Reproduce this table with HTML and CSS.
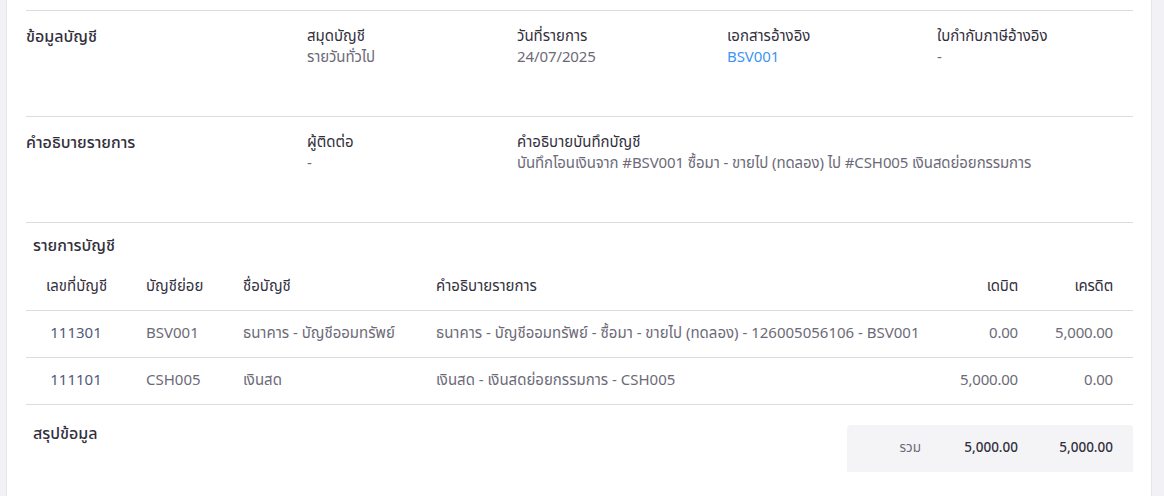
FILE: index.html
```html
<!DOCTYPE html>
<html lang="th">
<head>
<meta charset="utf-8">
<title>รายละเอียดบันทึกบัญชี</title>
<link rel="stylesheet" href="styles.css">
</head>
<body>
<div class="page">
  <main class="card">
    <section class="info-section">
      <h2 class="section-title">ข้อมูลบัญชี</h2>
      <div class="field">
        <div class="field-label">สมุดบัญชี</div>
        <div class="field-value">รายวันทั่วไป</div>
      </div>
      <div class="field">
        <div class="field-label">วันที่รายการ</div>
        <div class="field-value">24/07/2025</div>
      </div>
      <div class="field">
        <div class="field-label">เอกสารอ้างอิง</div>
        <div class="field-value"><a class="link" href="#">BSV001</a></div>
      </div>
      <div class="field">
        <div class="field-label">ใบกำกับภาษีอ้างอิง</div>
        <div class="field-value">-</div>
      </div>
    </section>

    <section class="info-section">
      <h2 class="section-title">คำอธิบายรายการ</h2>
      <div class="field">
        <div class="field-label">ผู้ติดต่อ</div>
        <div class="field-value">-</div>
      </div>
      <div class="field field-wide">
        <div class="field-label">คำอธิบายบันทึกบัญชี</div>
        <div class="field-value">บันทึกโอนเงินจาก #BSV001 ซื้อมา - ขายไป (ทดลอง) ไป #CSH005 เงินสดย่อยกรรมการ</div>
      </div>
    </section>

    <section class="table-section">
      <h3 class="sub-title">รายการบัญชี</h3>
      <table class="ledger">
        <colgroup>
          <col class="c-no"><col class="c-sub"><col class="c-name"><col class="c-desc"><col class="c-dr"><col class="c-cr">
        </colgroup>
        <thead>
          <tr>
            <th class="center">เลขที่บัญชี</th>
            <th>บัญชีย่อย</th>
            <th>ชื่อบัญชี</th>
            <th>คำอธิบายรายการ</th>
            <th class="num">เดบิต</th>
            <th class="num">เครดิต</th>
          </tr>
        </thead>
        <tbody>
          <tr>
            <td class="center">111301</td>
            <td>BSV001</td>
            <td>ธนาคาร - บัญชีออมทรัพย์</td>
            <td>ธนาคาร - บัญชีออมทรัพย์ - ซื้อมา - ขายไป (ทดลอง) - 126005056106 - BSV001</td>
            <td class="num">0.00</td>
            <td class="num">5,000.00</td>
          </tr>
          <tr>
            <td class="center">111101</td>
            <td>CSH005</td>
            <td>เงินสด</td>
            <td>เงินสด - เงินสดย่อยกรรมการ - CSH005</td>
            <td class="num">5,000.00</td>
            <td class="num">0.00</td>
          </tr>
        </tbody>
      </table>
    </section>

    <section class="summary-section">
      <h3 class="sub-title">สรุปข้อมูล</h3>
      <div class="totals">
        <span class="totals-label">รวม</span>
        <span class="totals-value">5,000.00</span>
        <span class="totals-value">5,000.00</span>
      </div>
    </section>
  </main>
</div>
</body>
</html>
```
FILE: styles.css
```css
* { box-sizing: border-box; }

html, body {
  margin: 0;
  padding: 0;
  height: 100%;
}

body {
  background: #f2f1f6;
  font-family: "Noto Sans Thai", "Noto Sans", sans-serif;
  font-size: 15px;
  color: #6d6a78;
  overflow: hidden;
}

.page {
  padding-left: 6px;
  width: 1152px;
  height: 100%;
}

.card {
  background: #ffffff;
  border-left: 1px solid #e6e5ec;
  border-right: 1px solid #e6e5ec;
  height: 100%;
  padding: 10px 18px 0 19px;
}

.info-section {
  display: grid;
  grid-template-columns: 281px 210px 210px 210px 1fr;
  align-items: start;
  border-top: 1px solid #dddce4;
  padding: 15px 0 0;
  height: 106px;
}

.section-title {
  margin: 0;
  font-size: 16px;
  font-weight: 500;
  line-height: 22px;
  color: #33303d;
}

.field-wide {
  grid-column: 3 / 6;
}

.field-label {
  font-size: 15px;
  font-weight: 450;
  line-height: 21px;
  color: #33303d;
}

.field-value {
  font-size: 15px;
  line-height: 21px;
  color: #6d6a78;
  letter-spacing: -0.1px;
}

.link {
  color: #3d96f2;
  text-decoration: none;
}

.table-section {
  border-top: 1px solid #dddce4;
}

.sub-title {
  margin: 0;
  padding: 12px 7px 0;
  font-size: 16px;
  font-weight: 500;
  line-height: 22px;
  color: #33303d;
}

.ledger {
  width: 100%;
  border-collapse: collapse;
  table-layout: fixed;
  margin-top: 7px;
}

.c-no { width: 100px; }
.c-sub { width: 97px; }
.c-name { width: 193px; }
.c-desc { width: auto; }
.c-dr { width: 100px; }
.c-cr { width: 95px; }

.ledger th,
.ledger td {
  padding: 0 20px;
  height: 47px;
  text-align: left;
  white-space: nowrap;
  border-bottom: 1px solid #dddce4;
}

.ledger th {
  font-weight: 450;
  color: #33303d;
  height: 46px;
}

.ledger td {
  color: #6d6a78;
}

.ledger td:first-child {
  color: #4f5c7a;
}

.ledger .center { text-align: center; }
.ledger .num {
  text-align: right;
  padding-left: 6px;
  letter-spacing: -0.2px;
}

.summary-section {
  display: flex;
  justify-content: space-between;
  align-items: flex-start;
  padding-top: 8px;
}

.summary-section .sub-title {
  padding-top: 10px;
}

.totals {
  margin-top: 12px;
  width: 286px;
  height: 47px;
  background: #f4f4f6;
  border-radius: 4px 4px 0 0;
  display: grid;
  grid-template-columns: 1fr 97px 95px;
  align-items: center;
}

.totals span {
  padding-right: 20px;
  text-align: right;
  font-size: 13.5px;
}

.totals-label {
  color: #6d6a78;
}

.totals-value {
  color: #33303d;
  font-weight: 500;
}
```
